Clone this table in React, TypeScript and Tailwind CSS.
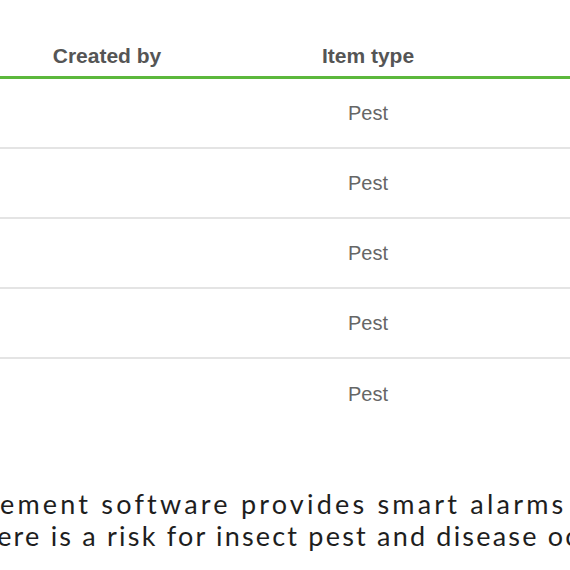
import React from 'react';

const rows = ['Pest', 'Pest', 'Pest', 'Pest', 'Pest'];

export default function App() {
    return (
        <div className="w-[570px] h-[570px] overflow-hidden bg-white" style={{ fontFamily: '"Liberation Sans", Arial, sans-serif' }}>
            {/* Table */}
            <div className="w-full">
                <div className="flex h-[79px] items-end pb-[10px] border-b-[3px] border-[#5cb83c]">
                    <div className="w-[214px] text-center text-[21px] font-bold text-[#555555] leading-none">Created by</div>
                    <div className="w-[308px] text-center text-[21px] font-bold text-[#555555] leading-none">Item type</div>
                </div>
                {rows.map((type, i) => (
                    <div
                        key={i}
                        className={`flex h-[70px] items-center ${i < rows.length - 1 ? 'border-b-2 border-[#e4e4e4]' : ''}`}
                    >
                        <div className="w-[214px]" />
                        <div className="w-[308px] text-center text-[20px] text-[#666666]">{type}</div>
                    </div>
                ))}
            </div>

            {/* Description text */}
            <div className="mt-[59px] text-[27px] leading-[32px] text-[#1e1e1e] whitespace-nowrap" style={{ fontFamily: 'Lato, sans-serif' }}>
                <p className="ml-[-94px] tracking-[3.2px]">management software provides smart alarms for when</p>
                <p className="ml-[-32px] tracking-[2.2px]">there is a risk for insect pest and disease occurrence.</p>
            </div>
        </div>
    );
}
